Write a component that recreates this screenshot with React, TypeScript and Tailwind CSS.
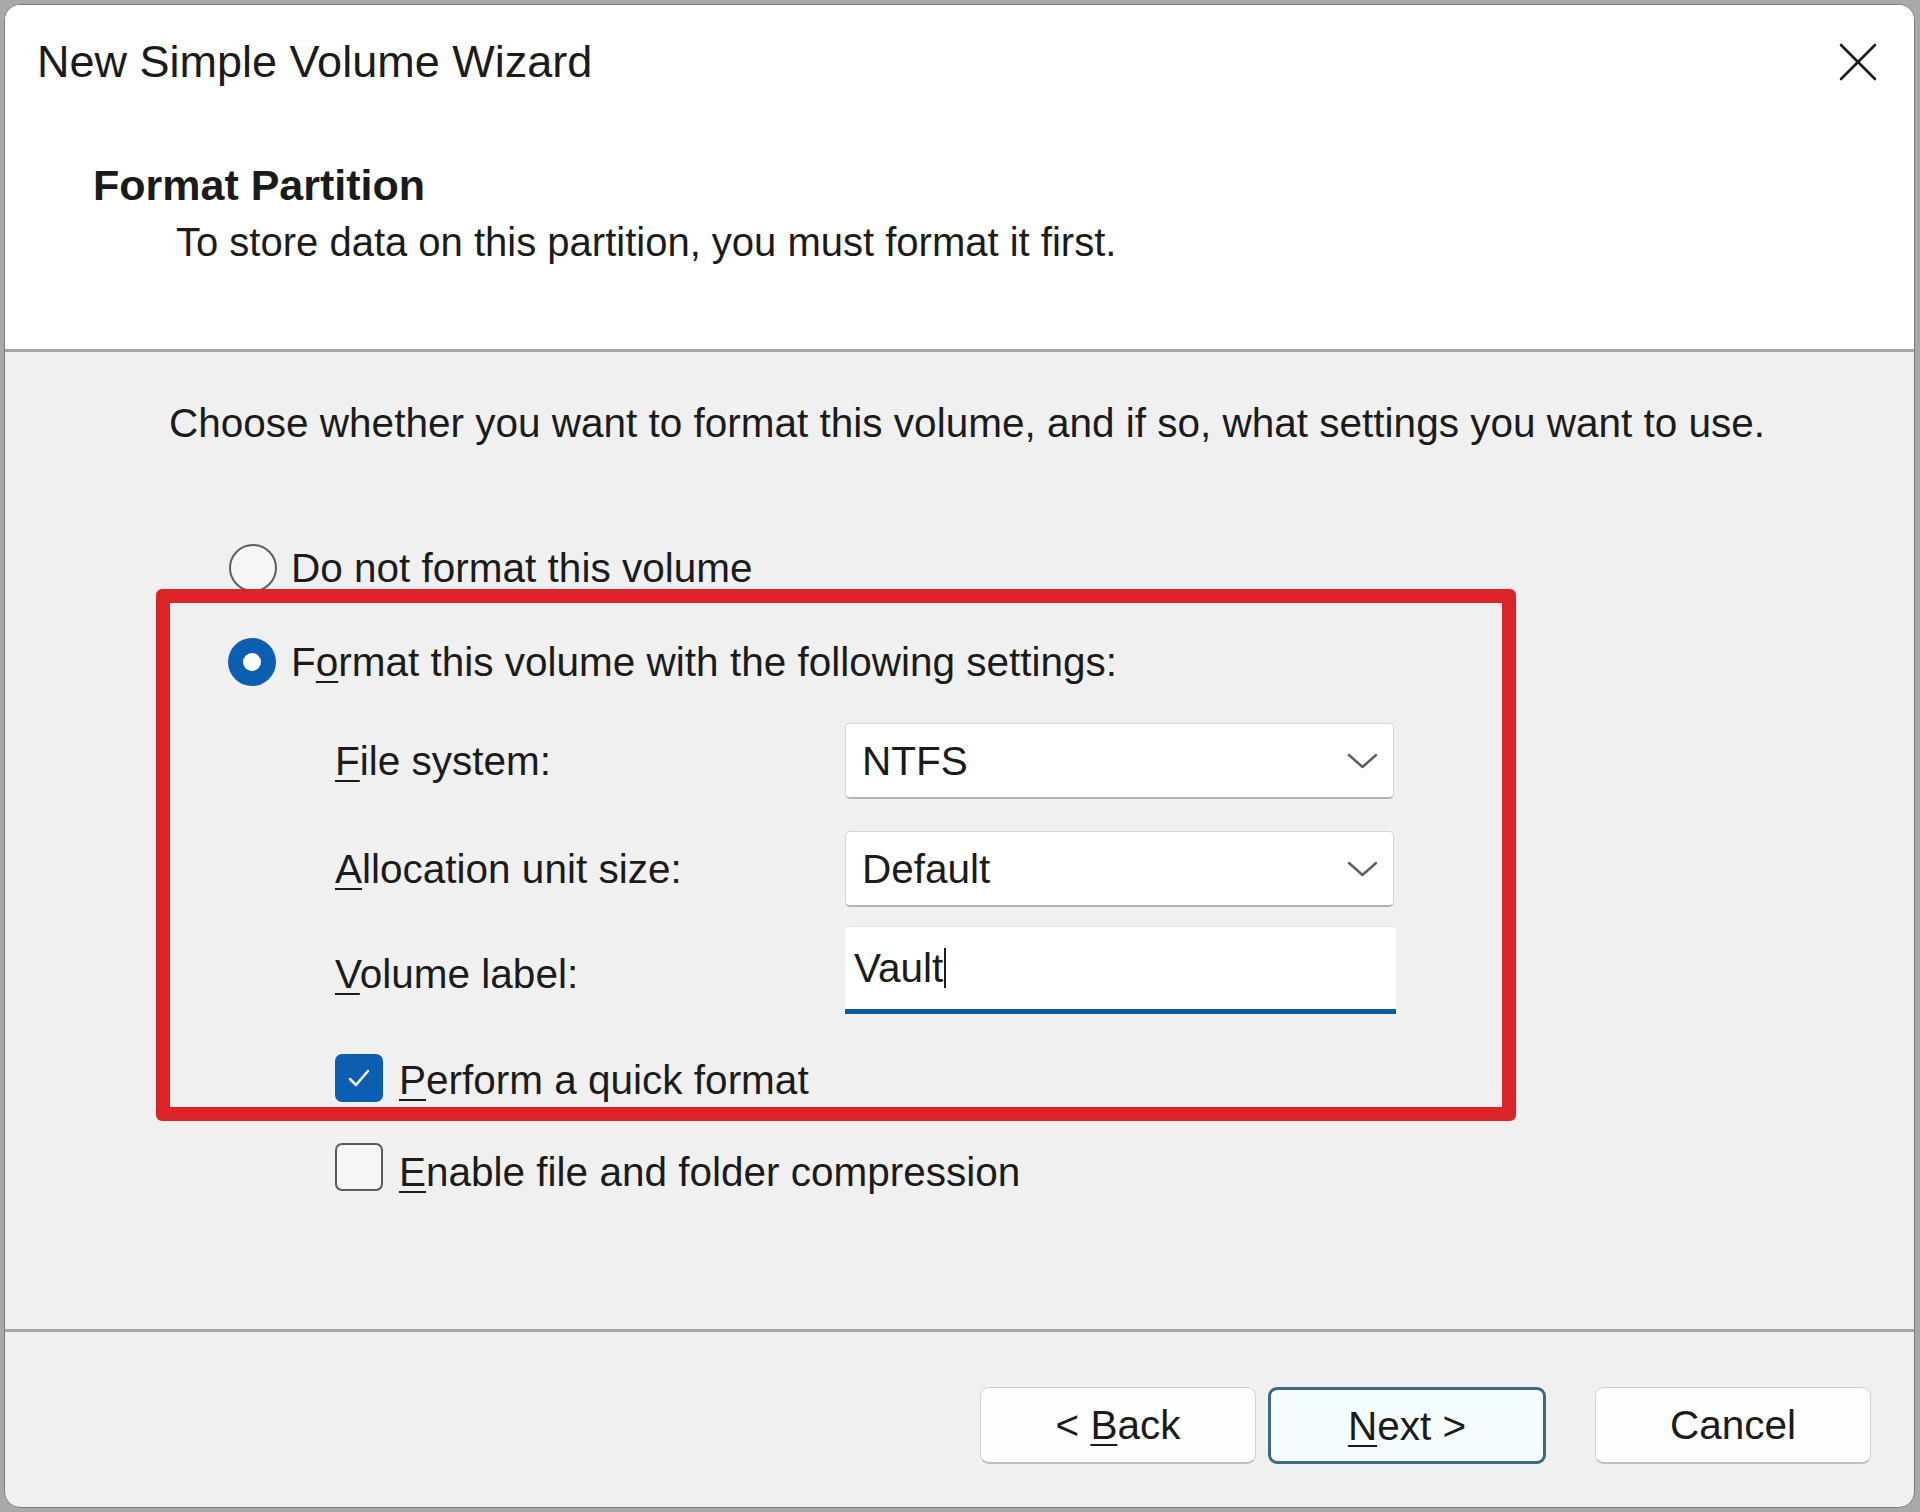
import React from 'react';

const font = { fontFamily: '"Liberation Sans", Arial, sans-serif' };

function Key({ children }: { children: React.ReactNode }) {
  return <span className="underline decoration-[2px] underline-offset-[5px]">{children}</span>;
}

function Radio({ checked }: { checked?: boolean }) {
  if (checked) {
    return (
      <div className="w-[48px] h-[48px] rounded-full bg-[#0a5fb2] flex items-center justify-center shrink-0">
        <div className="w-[18px] h-[18px] rounded-full bg-white" />
      </div>
    );
  }
  return <div className="w-[48px] h-[48px] rounded-full border-2 border-[#5e5e5e] bg-[#f6f6f6] shrink-0" />;
}

function Checkbox({ checked }: { checked?: boolean }) {
  if (checked) {
    return (
      <div className="w-[48px] h-[48px] rounded-[7px] bg-[#0a5fb2] flex items-center justify-center shrink-0">
        <svg width="48" height="48" viewBox="0 0 48 48">
          <path d="M15 25 L21 31 L33 17" fill="none" stroke="white" strokeWidth="2.5" strokeLinecap="round" strokeLinejoin="round" />
        </svg>
      </div>
    );
  }
  return <div className="w-[48px] h-[48px] rounded-[7px] border-2 border-[#5a5a5a] bg-[#f6f6f6] shrink-0" />;
}

function Combo({ value }: { value: string }) {
  return (
    <div className="w-[549px] h-[76px] bg-white border border-[#d6d6d6] border-b-[#b4b4b4] border-b-2 rounded-[5px] flex items-center justify-between pl-[16px] pr-[15px]">
      <span>{value}</span>
      <svg width="31" height="18" viewBox="0 0 31 18">
        <path d="M2 3 L15.5 15 L29 3" fill="none" stroke="#5f5f5f" strokeWidth="2.5" strokeLinecap="round" strokeLinejoin="round" />
      </svg>
    </div>
  );
}

function Button({ children, primary }: { children: React.ReactNode; primary?: boolean }) {
  return (
    <div
      className={
        primary
          ? 'w-[278px] h-[77px] rounded-[9px] border-[3px] border-[#3b6b7e] bg-[#f4fcff] flex items-center justify-center'
          : 'w-[276px] h-[77px] rounded-[9px] border border-[#d2d2d2] border-b-[#bdbdbd] border-b-2 bg-[#fdfdfd] flex items-center justify-center'
      }
    >
      {children}
    </div>
  );
}

export default function App() {
  return (
    <div className="w-[1920px] h-[1512px] bg-[#a8a8a8] pt-[4px] pl-[4px]" style={font}>
      <div className="relative w-[1911px] h-[1504px] rounded-[16px] border border-[#7c7c7c] bg-[#f0f0f0] overflow-hidden flex flex-col text-[40.5px] leading-[48px] text-[#1b1b1b]">
        {/* Header */}
        <div className="h-[344px] bg-white shrink-0">
          <div className="flex items-center justify-between pt-[33px] pl-[32px] pr-[36px]">
            <span className="text-[45px]">New Simple Volume Wizard</span>
            <svg width="40" height="40" viewBox="0 0 40 40">
              <path d="M3 3 L37 37 M37 3 L3 37" stroke="#1b1b1b" strokeWidth="2.6" strokeLinecap="round" />
            </svg>
          </div>
          <div className="mt-[75px] pl-[88px] text-[43px] font-bold">Format Partition</div>
          <div className="mt-[9px] pl-[171px] text-[40px]">To store data on this partition, you must format it first.</div>
        </div>
        <div className="h-[3px] bg-[#a6a6a6] shrink-0" />

        {/* Body */}
        <div className="flex-1 flex flex-col">
          <div className="mt-[47px] pl-[164px]">Choose whether you want to format this volume, and if so, what settings you want to use.</div>

          <div className="mt-[97px] pl-[224px] flex items-center gap-[14px]">
            <Radio />
            <span>Do not format this volume</span>
          </div>
          <div className="mt-[46px] pl-[223px] flex items-center gap-[15px]">
            <Radio checked />
            <span>F<Key>o</Key>rmat this volume with the following settings:</span>
          </div>

          <div className="mt-[37px] pl-[330px] flex items-center">
            <span className="w-[510px]"><Key>F</Key>ile system:</span>
            <Combo value="NTFS" />
          </div>
          <div className="mt-[32px] pl-[330px] flex items-center">
            <span className="w-[510px]"><Key>A</Key>llocation unit size:</span>
            <Combo value="Default" />
          </div>
          <div className="mt-[19px] pl-[330px] flex items-center">
            <span className="w-[510px] pt-[8px]"><Key>V</Key>olume label:</span>
            <div className="w-[551px] h-[88px] bg-white border-t border-[#e6e6e6] rounded-t-[5px] border-b-[5px] border-b-[#0d5c9a] flex items-center pl-[9px]">
              <span>Vault</span>
              <span className="w-[2px] h-[40px] bg-[#1b1b1b] ml-[1px]" />
            </div>
          </div>

          <div className="mt-[38px] pl-[330px] flex items-center gap-[16px]">
            <Checkbox checked />
            <span className="pt-[4px]"><Key>P</Key>erform a quick format</span>
          </div>
          <div className="mt-[34px] pl-[330px] flex items-center gap-[16px]">
            <Checkbox />
            <span className="pt-[10px]"><Key>E</Key>nable file and folder compression</span>
          </div>
        </div>

        {/* Footer */}
        <div className="h-[3px] bg-[#a6a6a6] shrink-0" />
        <div className="h-[175px] shrink-0 flex justify-end pt-[55px] pr-[43px]">
          <div className="flex">
            <Button><span>&lt; <Key>B</Key>ack</span></Button>
            <div className="ml-[12px]">
              <Button primary><span><Key>N</Key>ext &gt;</span></Button>
            </div>
            <div className="ml-[49px]">
              <Button>Cancel</Button>
            </div>
          </div>
        </div>

        {/* Red highlight annotation */}
        <div className="absolute left-[151px] top-[584px] w-[1360px] h-[532px] border-[14px] border-[#dc2328] rounded-[6px] pointer-events-none" />
      </div>
    </div>
  );
}
